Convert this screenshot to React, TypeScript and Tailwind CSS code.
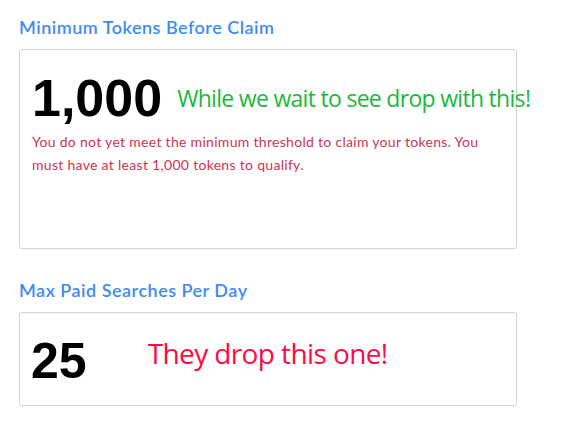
export default function App() {
  return (
    <div className="w-[585px] h-[438px] bg-white px-[19px] pt-[15px] font-['Lato',sans-serif]">
      <h2 className="text-[18px] font-semibold text-[#3f8cf0] leading-[24px] tracking-[0.5px]">Minimum Tokens Before Claim</h2>
      <div className="mt-[10px] w-[498px] h-[200px] border border-[#d3d3d3] rounded-[3px] px-[12px] pt-[22px]">
        <div className="flex items-center">
          <span className="font-['Liberation_Sans',sans-serif] font-bold text-[52px] leading-[52px] text-black">1,000</span>
          <span className="ml-[15px] whitespace-nowrap font-['Open_Sans',sans-serif] text-[23px] text-[#1cb83c] leading-[30px] tracking-[-0.7px]">
            While we wait to see drop with this!
          </span>
        </div>
        <p className="mt-[6px] text-[14px] leading-[23px] text-[#cf3352] pr-[20px] tracking-[0.3px]">
          You do not yet meet the minimum threshold to claim your tokens. You must have at least 1,000 tokens to qualify.
        </p>
      </div>
      <h2 className="mt-[29px] text-[18px] font-semibold text-[#3f8cf0] leading-[24px] tracking-[0.5px]">Max Paid Searches Per Day</h2>
      <div className="mt-[10px] w-[498px] h-[94px] border border-[#d3d3d3] rounded-[3px] px-[11px] flex items-center">
        <span className="font-['Liberation_Sans',sans-serif] font-bold text-[50px] leading-[50px] text-black mt-[4px]">25</span>
        <span className="ml-[61px] mb-[12px] whitespace-nowrap font-['Open_Sans',sans-serif] text-[28px] text-[#ff0a45] leading-[34px] tracking-[-0.6px]">
          They drop this one!
        </span>
      </div>
    </div>
  )
}
